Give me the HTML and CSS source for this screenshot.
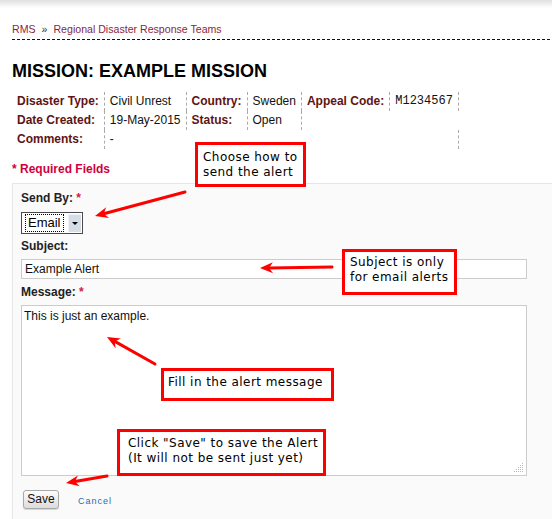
FILE: index.html
```html
<!DOCTYPE html>
<html>
<head>
<meta charset="utf-8">
<title>Mission</title>
<link rel="stylesheet" href="styles.css">
</head>
<body>
<div class="topbar"></div>
<div class="page">
  <div class="breadcrumb"><a class="crumb">RMS</a><span class="crumb-sep">»</span><a class="crumb">Regional Disaster Response Teams</a></div>
  <div class="rule"></div>
  <h1 class="title">MISSION: EXAMPLE MISSION</h1>
  <table class="details">
    <tr>
      <th>Disaster Type:</th><td class="val">Civil Unrest</td>
      <th>Country:</th><td class="val">Sweden</td>
      <th>Appeal Code:</th><td class="val mono">M1234567</td>
    </tr>
    <tr>
      <th>Date Created:</th><td class="val">19-May-2015</td>
      <th>Status:</th><td class="val">Open</td>
      <td colspan="2"></td>
    </tr>
    <tr>
      <th>Comments:</th><td class="val" colspan="5">-</td>
    </tr>
  </table>
  <div class="required"><span class="star">*</span> Required Fields</div>
</div>

<form class="form-area">
  <div class="field-label">Send By: <span class="req">*</span></div>
  <div class="select-row">
    <div class="select">
      <span class="select-value">Email</span>
      <span class="select-btn"><span class="caret"></span></span>
    </div>
  </div>
  <div class="field-label label-subject">Subject:</div>
  <input class="text-input" type="text" value="Example Alert">
  <div class="field-label label-message">Message: <span class="req">*</span></div>
  <div class="textarea-wrap">
    <textarea class="textarea">This is just an example.</textarea>
    <svg class="grip" width="10" height="10" viewBox="0 0 10 10">
      <rect x="8" y="0" width="1" height="1" fill="#bbb"/>
      <rect x="6" y="2" width="1" height="1" fill="#bbb"/><rect x="8" y="2" width="1" height="1" fill="#bbb"/>
      <rect x="4" y="4" width="1" height="1" fill="#bbb"/><rect x="6" y="4" width="1" height="1" fill="#bbb"/><rect x="8" y="4" width="1" height="1" fill="#bbb"/>
      <rect x="2" y="6" width="1" height="1" fill="#bbb"/><rect x="4" y="6" width="1" height="1" fill="#bbb"/><rect x="6" y="6" width="1" height="1" fill="#bbb"/><rect x="8" y="6" width="1" height="1" fill="#bbb"/>
      <rect x="0" y="8" width="1" height="1" fill="#bbb"/><rect x="2" y="8" width="1" height="1" fill="#bbb"/><rect x="4" y="8" width="1" height="1" fill="#bbb"/><rect x="6" y="8" width="1" height="1" fill="#bbb"/><rect x="8" y="8" width="1" height="1" fill="#bbb"/>
    </svg>
  </div>
  <div class="actions">
    <button class="btn" type="button">Save</button>
    <a class="cancel">Cancel</a>
  </div>
</form>

<div class="note note-send">Choose how to<br>send the alert</div>
<div class="note note-subject">Subject is only<br>for email alerts</div>
<div class="note note-message">Fill in the alert message</div>
<div class="note note-save">Click "Save" to save the Alert<br>(It will not be sent just yet)</div>

<svg class="arrows" width="552" height="519" viewBox="0 0 552 519">
  <g stroke="#f00" stroke-width="3" stroke-linecap="round" fill="none">
    <line x1="185" y1="192" x2="103.7" y2="213.7"/>
    <line x1="332" y1="267" x2="269" y2="267.9"/>
    <line x1="155" y1="364" x2="114.8" y2="341.4"/>
    <line x1="107" y1="476" x2="74.9" y2="481.5"/>
  </g>
  <g fill="#f00">
    <polygon points="95,216 106.2,207.3 103.7,213.7 109,217.9"/>
    <polygon points="260,268 272.9,262.3 269,267.9 273.1,273.3"/>
    <polygon points="107,337 121,338.6 114.8,341.4 115.6,348.2"/>
    <polygon points="66,483 77.9,475.4 74.9,481.5 79.7,486.2"/>
  </g>
</svg>
</body>
</html>
```

FILE: styles.css
```css
html, body {
  margin: 0;
  padding: 0;
  background: #fff;
}
body {
  position: relative;
  font-family: "Liberation Sans", Arial, sans-serif;
  font-size: 12px;
  color: #000;
  overflow: hidden;
  height: 519px;
}
.topbar {
  height: 8px;
  background: linear-gradient(#e0e0e0, #ffffff);
}
.page {
  padding-left: 12px;
}
.breadcrumb {
  margin-top: 14px;
  font-size: 10.6px;
  line-height: 14px;
  white-space: nowrap;
}
.crumb {
  color: #8a1f3d;
  text-decoration: none;
}
.crumb-sep {
  color: #333;
  margin: 0 6px 0 6px;
}
.rule {
  margin-top: 3px;
  height: 1px;
  background: repeating-linear-gradient(to right, #111 0 3px, transparent 3px 5px);
}
.title {
  margin: 21px 0 0;
  font-size: 18px;
  line-height: 20px;
  font-weight: bold;
  color: #000;
}
.details {
  margin-top: 11px;
  border-collapse: separate;
  border-spacing: 0;
}
.details th,
.details td {
  padding: 2px 5px;
  line-height: 15px;
  font-size: 12px;
  text-align: left;
  vertical-align: top;
  white-space: nowrap;
}
.details th {
  font-weight: bold;
  color: #5e1414;
}
.details td.val {
  color: #111;
  border-left: 1px dashed #aaa;
  border-right: 1px dashed #aaa;
}
.details td.mono {
  font-family: "Liberation Mono", "Courier New", monospace;
}
.required {
  margin-top: 13px;
  font-weight: bold;
  line-height: 15px;
  color: #d0003c;
}
.form-area {
  margin: 6px 0 0 12px;
  border-top: 1px solid #e6e6e6;
  border-left: 1px solid #e6e6e6;
  background: #fafafa;
  padding: 7px 8px 60px 8px;
}
.field-label {
  font-weight: bold;
  line-height: 15px;
  color: #222;
}
.req {
  color: #d0184e;
}
.select-row {
  margin-top: 6px;
  height: 22px;
}
.select {
  display: inline-flex;
  align-items: stretch;
  box-sizing: border-box;
  width: 62px;
  height: 22px;
  border: 1px solid #4a4a4a;
  background: #fff;
  padding: 1px 1px 1px 3px;
}
.select-value {
  box-sizing: border-box;
  width: 39px;
  border: 1px dotted #000;
  font-size: 13px;
  line-height: 16px;
  padding-left: 2px;
  color: #000;
}
.select-btn {
  margin-left: 4px;
  flex: 1;
  background: #d5dde6;
  border-left: 1px solid #eef2f6;
  border-top: 1px solid #eef2f6;
  display: flex;
  align-items: center;
  justify-content: center;
}
.caret {
  width: 0;
  height: 0;
  border-left: 3px solid transparent;
  border-right: 3px solid transparent;
  border-top: 3px solid #000;
}
.label-subject {
  margin-top: 5px;
}
.text-input {
  display: block;
  box-sizing: border-box;
  margin: 5px 0 0;
  width: 506px;
  height: 20px;
  border: 1px solid #ccc;
  background: #fff;
  padding: 0 3px;
  font-family: "Liberation Sans", Arial, sans-serif;
  font-size: 12px;
  color: #111;
  outline: none;
}
.label-message {
  margin-top: 6px;
}
.textarea-wrap {
  position: relative;
  margin-top: 5px;
  width: 506px;
  height: 171px;
}
.textarea {
  display: block;
  box-sizing: border-box;
  margin: 0;
  width: 506px;
  height: 171px;
  border: 1px solid #ccc;
  background: #fff;
  padding: 3px 2px 1px;
  font-family: "Liberation Sans", Arial, sans-serif;
  font-size: 12px;
  line-height: 14px;
  color: #111;
  resize: none;
  outline: none;
}
.grip {
  position: absolute;
  right: 3px;
  bottom: 3px;
}
.actions {
  margin-top: 14px;
  display: flex;
  align-items: center;
  padding-left: 2px;
}
.btn {
  box-sizing: border-box;
  width: 36px;
  height: 19px;
  padding: 0;
  border: 1px solid #a8a8a8;
  border-radius: 3px;
  background: linear-gradient(#fdfdfd, #dcdcdc);
  box-shadow: 0 1px 1px rgba(0,0,0,0.15);
  font-family: "Liberation Sans", Arial, sans-serif;
  font-size: 12px;
  line-height: 17px;
  color: #111;
}
.cancel {
  margin-left: 19px;
  margin-top: 2px;
  font-size: 9px;
  letter-spacing: 1px;
  color: #1e6db4;
  text-decoration: none;
}
.note {
  position: absolute;
  box-sizing: border-box;
  border: 3px solid #f00;
  background: #fff;
  font-family: "DejaVu Sans", sans-serif;
  font-size: 12px;
  line-height: 15px;
  letter-spacing: 0.45px;
  color: #000;
  white-space: nowrap;
}
.note-send {
  left: 195px;
  top: 142px;
  width: 111px;
  height: 45px;
  padding: 5px 5px;
}
.note-subject {
  left: 342px;
  top: 249px;
  width: 115px;
  height: 46px;
  padding: 3px 5px;
}
.note-message {
  left: 161px;
  top: 368px;
  width: 173px;
  height: 33px;
  padding: 4px 4px;
}
.note-save {
  left: 117px;
  top: 429px;
  width: 209px;
  height: 47px;
  padding: 4px 8px;
}
.arrows {
  position: absolute;
  left: 0;
  top: 0;
  pointer-events: none;
}
```
